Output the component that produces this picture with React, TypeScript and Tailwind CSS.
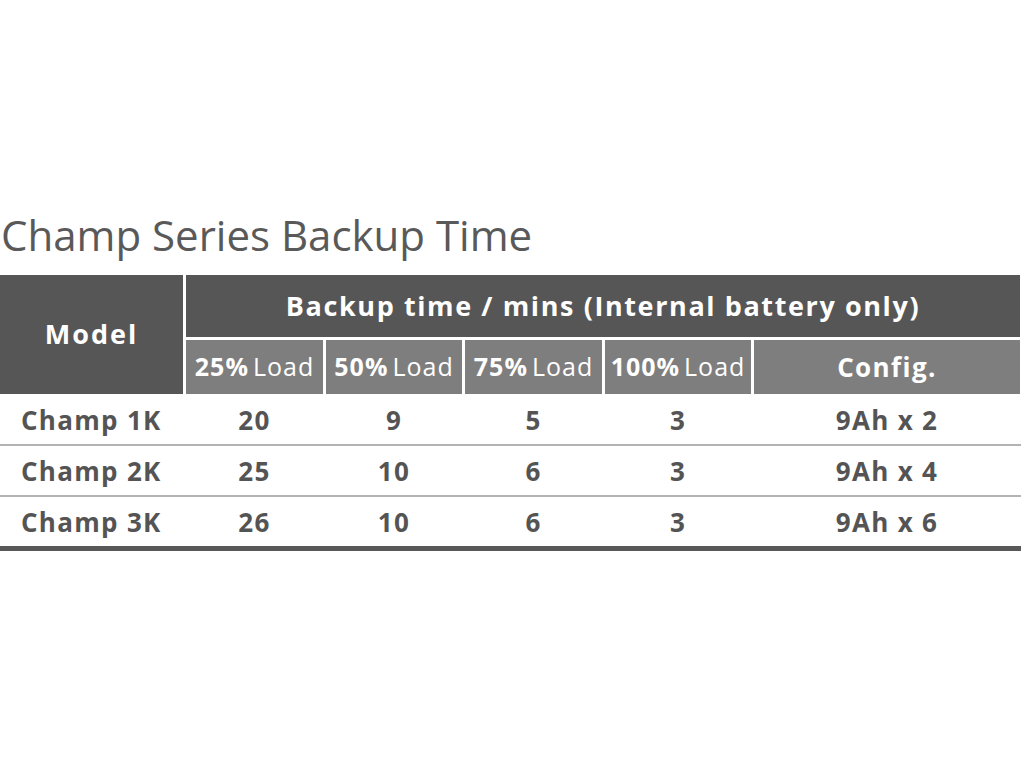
const rows = [
  { model: "Champ 1K", v: ["20", "9", "5", "3"], config: "9Ah x 2", h: "h-[52px] border-b-2 border-[#b3b3b3]" },
  { model: "Champ 2K", v: ["25", "10", "6", "3"], config: "9Ah x 4", h: "h-[51px] border-b-2 border-[#b3b3b3]" },
  { model: "Champ 3K", v: ["26", "10", "6", "3"], config: "9Ah x 6", h: "h-[54px] border-b-[5px] border-[#595858]" },
];

const loads = ["25%", "50%", "75%", "100%"];

const cols = "grid-cols-[183px_137px_136px_137px_146px_266px]";

export default function App() {
  return (
    <div className="w-[1024px] h-[768px] bg-white font-['Open_Sans',sans-serif] text-[#555454]">
      <div className="pt-[207px]">
        <h1 className="pl-[1px] text-[42px] leading-[56px] text-[#5a5959]">
          Champ Series Backup Time
        </h1>
        <div className="mt-[12px] w-[1021px]">
          <div className={`grid ${cols} grid-rows-[62px_54px] gap-[3px] text-white font-bold`}>
            <div className="row-span-2 bg-[#575656] flex items-center justify-center text-[27px] tracking-[2px]">
              Model
            </div>
            <div className="col-span-5 bg-[#575656] flex items-center justify-center text-[27px] tracking-[1.6px]">
              Backup time / mins (Internal battery only)
            </div>
            {loads.map((l) => (
              <div key={l} className="bg-[#7f7e7e] flex items-center justify-center text-[25px] tracking-[1px] whitespace-nowrap">
                {l}
                <span className="font-normal ml-[4px]">Load</span>
              </div>
            ))}
            <div className="bg-[#7f7e7e] flex items-center justify-center text-[26px] tracking-[1.4px]">
              Config.
            </div>
          </div>
          {rows.map((r) => (
            <div
              key={r.model}
              className={`grid ${cols} gap-[3px] items-center pt-[2px] font-bold text-[26px] tracking-[1.3px] ${r.h}`}
            >
              <div className="pl-[21px]">{r.model}</div>
              {r.v.map((x, j) => (
                <div key={j} className="text-center">{x}</div>
              ))}
              <div className="text-center">{r.config}</div>
            </div>
          ))}
        </div>
      </div>
    </div>
  );
}
